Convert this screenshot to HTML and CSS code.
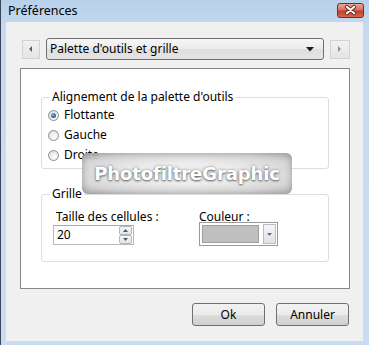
FILE: index.html
```html
<!DOCTYPE html>
<html lang="fr">
<head>
    <meta charset="UTF-8">
    <title>Préférences</title>
    <link rel="stylesheet" href="styles.css">
</head>
<body>
    <div class="window">
        <div class="titlebar">
            <span class="title">Préférences</span>
            <div class="close">
                <svg width="27" height="14" viewBox="0 0 27 14">
                    <path d="M9.5 3.5 L17.5 10.5 M17.5 3.5 L9.5 10.5" stroke="#6b2a20" stroke-width="4.2" stroke-linecap="round"/>
                    <path d="M9.5 3.5 L17.5 10.5 M17.5 3.5 L9.5 10.5" stroke="#ffffff" stroke-width="2.2" stroke-linecap="round"/>
                </svg>
            </div>
        </div>
        <div class="client">
            <div class="nav">
                <div class="nav-btn">
                    <svg width="4" height="6" viewBox="0 0 4 6"><path d="M3 0 L0 3 L3 6 Z" fill="#606060"/></svg>
                </div>
                <div class="combo">
                    <span>Palette d'outils et grille</span>
                    <svg width="8" height="5" viewBox="0 0 8 5"><path d="M0 0 H8 L4 4.5 Z" fill="#1a1a1a"/></svg>
                </div>
                <div class="nav-btn right">
                    <svg width="4" height="6" viewBox="0 0 4 6"><path d="M0 0 L3 3 L0 6 Z" fill="#8a8fa0"/></svg>
                </div>
            </div>

            <div class="panel">
                <fieldset class="group">
                    <legend>Alignement de la palette d'outils</legend>
                    <div class="radio-row"><span class="radio checked"></span>Flottante</div>
                    <div class="radio-row"><span class="radio"></span>Gauche</div>
                    <div class="radio-row"><span class="radio"></span>Droite</div>
                </fieldset>

                <fieldset class="group grid-group">
                    <legend>Grille</legend>
                    <div class="grid-cols">
                        <div class="col">
                            <div class="field-label">Taille des cellules :</div>
                            <div class="spin">
                                <span class="spin-value">20</span>
                                <div class="spin-btns">
                                    <div class="spin-btn"><svg width="5" height="3" viewBox="0 0 5 3"><path d="M0 3 L2.5 0 L5 3 Z" fill="#4a5a70"/></svg></div>
                                    <div class="spin-btn"><svg width="5" height="3" viewBox="0 0 5 3"><path d="M0 0 L2.5 3 L5 0 Z" fill="#4a5a70"/></svg></div>
                                </div>
                            </div>
                        </div>
                        <div class="col">
                            <div class="field-label color-label">Couleur :</div>
                            <div class="color-combo">
                                <div class="swatch"></div>
                                <div class="color-btn"><svg width="5" height="3" viewBox="0 0 5 3"><path d="M0 0 L2.5 3 L5 0 Z" fill="#6a7080"/></svg></div>
                            </div>
                        </div>
                    </div>
                </fieldset>

                <div class="watermark">PhotofiltreGraphic</div>
            </div>

            <div class="actions">
                <button class="btn">Ok</button>
                <button class="btn">Annuler</button>
            </div>
        </div>
    </div>
</body>
</html>
```

FILE: styles.css
```css
body {
    margin: 0;
    font-family: 'Noto Sans', 'Open Sans', sans-serif;
    font-size: 12px;
    color: #000;
    background: #ffffff;
}
.window {
    width: 369px;
    height: 345px;
    box-sizing: border-box;
    display: flex;
    flex-direction: column;
    padding: 0 6px 4px 5px;
    background: linear-gradient(#b8d0ea, #c6dbf1 30px, #c9ddf2);
    border-left: 1px solid #3c4654;
}
.titlebar {
    height: 22px;
    display: flex;
    align-items: center;
    justify-content: space-between;
    padding-left: 2px;
}
.title {
    font-size: 12.5px;
    line-height: 16px;
    margin-top: -1px;
}
.close {
    width: 25px;
    height: 13px;
    margin-right: -1px;
    margin-top: -2px;
    border: 1px solid #7d2b20;
    border-radius: 3px;
    background: linear-gradient(#e9a799, #d76f5d 45%, #c2402a 55%, #d4694f);
    display: flex;
    align-items: center;
    justify-content: center;
    overflow: hidden;
}
.client {
    flex: 1;
    background: #f0f0f0;
    padding: 16px 13px 0 14px;
}
.nav {
    display: flex;
    align-items: center;
    margin-left: 2px;
}
.nav-btn {
    width: 16px;
    height: 17px;
    border: 1px solid #d2d2d2;
    background: linear-gradient(#f2f2f2, #e4e4e4);
    display: flex;
    align-items: center;
    justify-content: center;
}
.nav-btn.right {
    width: 18px;
}
.combo {
    height: 20px;
    margin: 0 6px;
    border: 1px solid #707070;
    border-radius: 3px;
    background: linear-gradient(#f6f6f6, #ebebeb 50%, #dedede 51%, #e5e5e5);
    display: flex;
    align-items: center;
    justify-content: space-between;
    padding: 0 9px 0 3px;
    width: 264px;
}
.combo span {
    line-height: 16px;
}
.panel {
    position: relative;
    box-sizing: border-box;
    margin-top: 8px;
    height: 221px;
    background: #ffffff;
    border: 1px solid #828790;
    padding: 20px 20px 0 20px;
}
.group {
    margin: 0;
    padding: 0 6px 3px 6px;
    border: 1px solid #d5dfe5;
    border-radius: 3px;
}
.group legend {
    margin-left: 2px;
    padding: 0 2px;
    line-height: 16px;
}
.radio-row {
    height: 20px;
    display: flex;
    align-items: center;
    line-height: 16px;
}
.radio {
    width: 11px;
    height: 11px;
    box-sizing: border-box;
    border: 1px solid #8e8f8f;
    border-radius: 50%;
    background: radial-gradient(circle at 60% 65%, #ffffff, #e6e6e6 60%, #cfcfcf);
    margin: 0 5px 0 0;
    position: relative;
}
.radio.checked::after {
    content: "";
    position: absolute;
    left: 2px;
    top: 2px;
    width: 5px;
    height: 5px;
    border-radius: 50%;
    background: radial-gradient(circle at 40% 35%, #7fb6e8, #1c5aa5 70%, #163e74);
}
.grid-group {
    margin-top: 17px;
    padding: 0 6px 15px 11px;
}
.grid-group legend {
    margin-left: -3px;
}
.grid-cols {
    display: grid;
    grid-template-columns: 146px auto;
    padding-top: 7px;
}
.field-label {
    line-height: 16px;
    padding-left: 3px;
}
.color-label {
    padding-left: 0;
}
.spin {
    width: 81px;
    height: 20px;
    box-sizing: border-box;
    border: 1px solid #b6b9c0;
    border-top-color: #a5a8af;
    display: flex;
    align-items: center;
    justify-content: space-between;
    padding: 0 1px 0 3px;
}
.spin-value {
    line-height: 16px;
}
.spin-btns {
    display: flex;
    flex-direction: column;
}
.spin-btn {
    width: 11px;
    height: 7px;
    border: 1px solid #b2b6be;
    border-radius: 2px;
    background: linear-gradient(#f7f7f7, #e2e4e8);
    display: flex;
    align-items: center;
    justify-content: center;
}
.color-combo {
    margin-top: -3px;
    width: 79px;
    height: 24px;
    box-sizing: border-box;
    border: 1px solid #9a9a9a;
    background: #ffffff;
    display: flex;
    align-items: center;
    padding: 0 1px 0 2px;
    gap: 4px;
}
.swatch {
    width: 58px;
    height: 18px;
    box-sizing: border-box;
    background: #c0c0c0;
    border: 1px solid #9e9e9e;
}
.color-btn {
    width: 11px;
    height: 18px;
    border: 1px solid #b8bcc4;
    background: linear-gradient(#f5f5f5, #e0e2e6);
    display: flex;
    align-items: center;
    justify-content: center;
}
.watermark {
    position: absolute;
    left: 61px;
    top: 84px;
    width: 210px;
    height: 41px;
    border-radius: 6px;
    background: radial-gradient(ellipse at center, #ececec 35%, #d4d4d4 75%, #b0b0b0);
    box-shadow: inset 0 0 7px rgba(110, 110, 110, 0.65);
    opacity: 0.93;
    display: flex;
    align-items: center;
    justify-content: center;
    font-family: 'DejaVu Sans', sans-serif;
    font-weight: bold;
    font-size: 18px;
    color: #ffffff;
    text-shadow: 0 1px 2px #606060, 0 0 3px #8a8a8a;
    letter-spacing: -0.1px;
}
.actions {
    display: flex;
    justify-content: flex-end;
    gap: 11px;
    margin-top: 14px;
    margin-right: 1px;
}
.btn {
    width: 73px;
    height: 23px;
    font-family: inherit;
    font-size: 12px;
    line-height: 16px;
    padding: 0;
    border: 1px solid #707070;
    border-radius: 3px;
    background: linear-gradient(#f2f2f2, #ebebeb 50%, #dddddd 51%, #cfcfcf);
    color: #000;
}
```
